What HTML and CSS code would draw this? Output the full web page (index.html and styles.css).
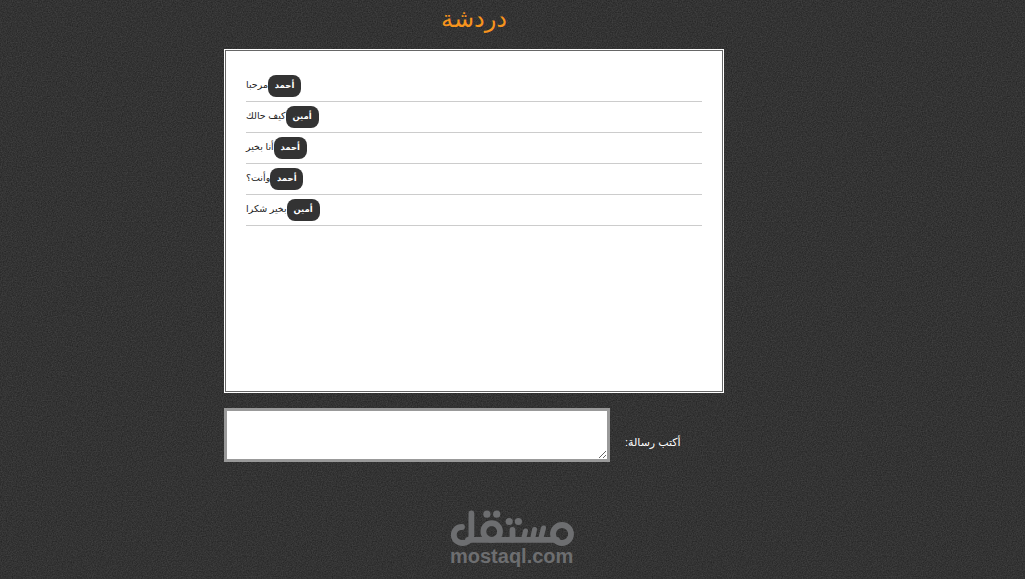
FILE: index.html
```html
<!DOCTYPE html>
<html lang="ar">
<head>
    <meta charset="UTF-8">
    <meta name="viewport" content="width=device-width, initial-scale=1.0">
    <title>دردشة</title>
    <link rel="stylesheet" href="styles.css">
</head>
<body>
    <svg class="grain" width="100%" height="100%" aria-hidden="true">
        <filter id="noise" x="0" y="0" width="100%" height="100%" color-interpolation-filters="sRGB">
            <feTurbulence type="fractalNoise" baseFrequency="0.8" numOctaves="2" stitchTiles="stitch"/>
            <feColorMatrix values="0.15 0 0 0 0.127  0.15 0 0 0 0.127  0.15 0 0 0 0.127  0 0 0 0 1"/>
        </filter>
        <rect width="100%" height="100%" filter="url(#noise)"/>
    </svg>

    <div id="page-wrap">
        <h1>دردشة</h1>

        <div id="chat-wrap">
            <div id="chat-area">
                <p><span class="name">أحمد</span><span class="msg">مرحبا</span></p>
                <p><span class="name">أمين</span><span class="msg">كيف حالك</span></p>
                <p><span class="name">أحمد</span><span class="msg">أنا بخير</span></p>
                <p><span class="name">أحمد</span><span class="msg">وأنت؟</span></p>
                <p><span class="name">أمين</span><span class="msg">بخير شكرا</span></p>
            </div>
        </div>

        <form id="send-message-area">
            <label for="sendie">أكتب رسالة:</label>
            <textarea id="sendie" maxlength="100"></textarea>
        </form>
    </div>

    <div class="brand">
        <svg class="brand-mark" width="126" height="40" viewBox="0 0 126 40" aria-label="مستقل">
            <g fill="none" stroke="#6d6e70" stroke-width="5.8" stroke-linecap="round" stroke-linejoin="round">
                <path d="M12 17C7 17 3.800 20.500 3.800 25C3.800 29.500 7.500 33 12.500 33C18 33 21.400 29.500 21.400 25V3.500"/>
                <path d="M18 29.800H107"/>
                <circle cx="41.700" cy="21.500" r="8.300"/>
                <path d="M62.500 20V29.500"/>
                <path d="M75.500 21L73.500 29.500" stroke-width="5"/>
                <path d="M84.500 19.500L82.500 29.500" stroke-width="5"/>
                <path d="M93.500 18L90.500 29.500" stroke-width="5"/>
                <circle cx="112" cy="24" r="9"/>
            </g>
            <g fill="#6d6e70">
                <circle cx="36.900" cy="4.200" r="3.600"/>
                <circle cx="46.700" cy="4.200" r="3.600"/>
                <circle cx="59.200" cy="11.500" r="3.600"/>
                <circle cx="68.400" cy="11.500" r="3.600"/>
            </g>
        </svg>
        <span class="brand-name">mostaql.com</span>
    </div>
</body>
</html>
```

FILE: styles.css
```css
* {
    margin: 0;
    padding: 0;
    box-sizing: border-box;
}
html, body {
    height: 100%;
    overflow: hidden;
}
body {
    font: 11px "Liberation Sans", "DejaVu Sans", sans-serif;
    background: #333;
}
.grain {
    position: absolute;
    inset: 0;
    z-index: -1;
}
#page-wrap {
    width: 500px;
    height: 510px;
    margin-left: 224px;
}
h1 {
    height: 49px;
    font-size: 24px;
    line-height: 38px;
    font-weight: normal;
    color: #f7941d;
    text-align: center;
}
#chat-wrap {
    height: 344px;
    border: 1px solid #fff;
}
#chat-area {
    height: 342px;
    padding: 20px;
    border: 1px solid #666;
    background: #fff;
    color: #222;
}
#chat-area p {
    display: flex;
    flex-direction: row-reverse;
    justify-content: flex-end;
    align-items: center;
    height: 31px;
    border-bottom: 1px solid #ccc;
    font-size: 9.5px;
    white-space: nowrap;
}
#chat-area .msg {
    line-height: 20px;
    padding-bottom: 2px;
}
#chat-area .name {
    width: 33px;
    height: 22px;
    border-radius: 8px;
    background: #333;
    color: #fff;
    font-size: 8.5px;
    font-weight: bold;
    line-height: 20px;
    text-align: center;
}
#send-message-area {
    display: flex;
    flex-direction: row-reverse;
    justify-content: flex-end;
    gap: 15px;
    margin-top: 15px;
}
#send-message-area label {
    padding-top: 28px;
    font-size: 11px;
    color: #fff;
    direction: rtl;
}
#sendie {
    width: 386px;
    height: 54px;
    border: 3px solid #999;
    background: #fff;
    resize: both;
    outline: none;
}
.brand {
    width: 126px;
    margin-left: 450px;
    color: #6d6e70;
}
.brand-mark {
    display: block;
    overflow: visible;
}
.brand-name {
    display: block;
    font-size: 20px;
    font-weight: bold;
    line-height: 12px;
}
```
